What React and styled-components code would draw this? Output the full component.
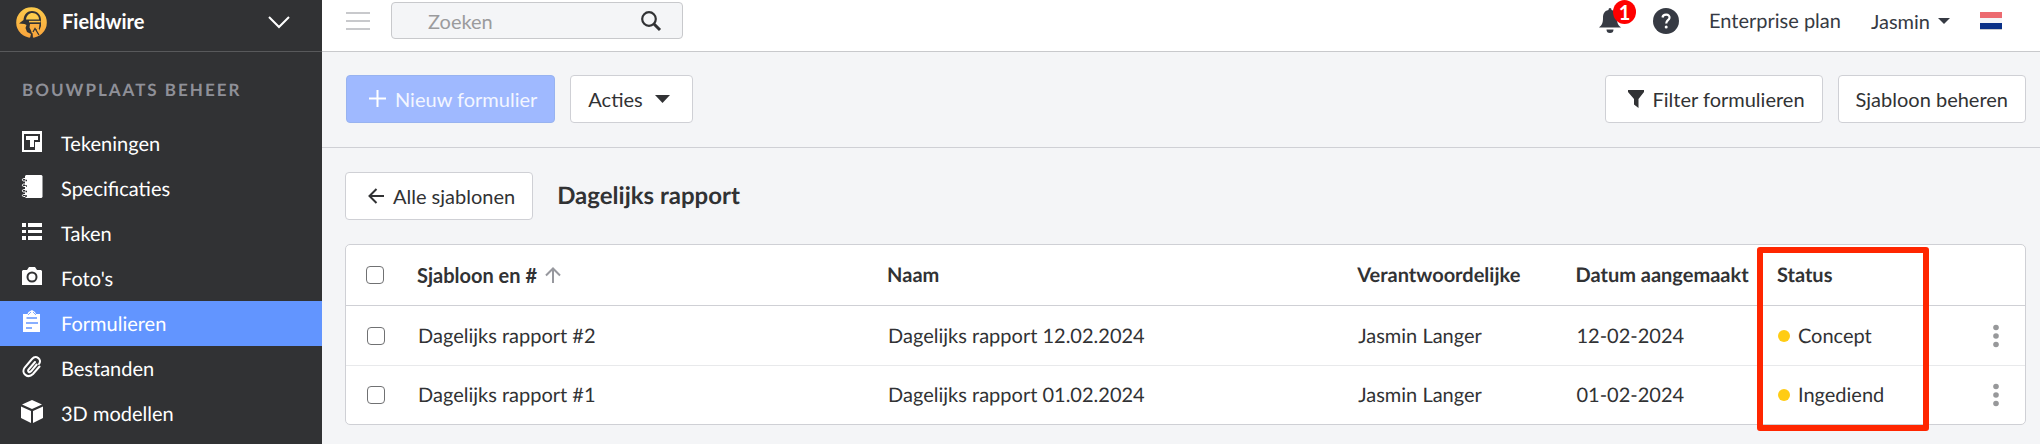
import { useState } from 'react'
import styled, { createGlobalStyle } from 'styled-components'

const GlobalStyle = createGlobalStyle`
  *, *::before, *::after {
    box-sizing: border-box;
  }
  body {
    margin: 0;
    background: #f4f5f7;
    color: #313234;
    font-family: Lato, "Liberation Sans", sans-serif;
    font-size: 20px;
    line-height: 24px;
    text-rendering: geometricPrecision;
  }
  button, input {
    font: inherit;
    color: inherit;
  }
  svg {
    display: block;
    flex: none;
  }
`

const Page = styled.div`
  display: flex;
  min-height: 100vh;
`

const Sidebar = styled.aside`
  flex: none;
  width: 322px;
  background: #313234;
  color: #fff;
`

const Project = styled.button`
  display: flex;
  align-items: center;
  width: 100%;
  height: 52px;
  padding: 0 32px 6px 16px;
  border: 0;
  border-bottom: 1px solid #58595b;
  background: none;
  font-weight: 700;
  text-align: left;
`

const ProjectName = styled.span`
  flex: 1;
  margin-left: 15px;
  padding-bottom: 4px;
  color: #fff;
`

const NavTitle = styled.h2`
  margin: 0;
  padding: 26px 22px 19px;
  color: #8f9098;
  font-size: 17px;
  font-weight: 700;
  line-height: 24px;
  letter-spacing: 2px;
  text-transform: uppercase;
  white-space: nowrap;
`

const NavLink = styled.a`
  display: flex;
  align-items: center;
  gap: 17px;
  height: 45px;
  padding: 0 20px;
  background: ${(props) => (props.$active ? '#6295ff' : 'transparent')};
  color: #fff;
  text-decoration: none;
  svg {
    margin-bottom: 4px;
  }
`

const Main = styled.main`
  flex: 1;
  min-width: 0;
`

const TopBar = styled.header`
  display: flex;
  align-items: center;
  height: 52px;
  padding: 0 38px 10px 24px;
  border-bottom: 1px solid #c8c9cc;
  background: #fff;
`

const PlainButton = styled.button`
  display: flex;
  align-items: center;
  gap: 8px;
  padding: 0;
  border: 0;
  background: none;
`

const Search = styled.label`
  display: flex;
  align-items: center;
  width: 292px;
  height: 37px;
  margin-left: 21px;
  padding: 0 20px 0 36px;
  border: 1px solid #c8c9cc;
  border-radius: 4px;
  background: #f4f5f7;
`

const SearchInput = styled.input`
  flex: 1;
  min-width: 0;
  padding: 0;
  border: 0;
  outline: 0;
  background: none;
  &::placeholder {
    color: #9b9b9d;
    opacity: 1;
  }
`

const Account = styled.div`
  display: flex;
  align-items: center;
  margin-left: auto;
  color: #363a43;
`

const Bell = styled(PlainButton)`
  position: relative;
  margin-right: 32px;
`

const Badge = styled.span`
  position: absolute;
  top: -8px;
  left: 14px;
  width: 23px;
  height: 24px;
  border-radius: 50%;
  background: #f00;
  color: #fff;
  font-weight: 700;
  line-height: 24px;
  text-align: center;
`

const Plan = styled.span`
  margin: 0 30px;
`

const Flag = styled(PlainButton)`
  margin-left: 30px;
`

const Toolbar = styled.div`
  display: flex;
  gap: 15px;
  padding: 23px 14px 24px 24px;
  border-bottom: 1px solid #cfd0d5;
`

const Spacer = styled.div`
  flex: 1;
`

const Button = styled.button`
  display: flex;
  align-items: center;
  gap: 9px;
  height: 48px;
  padding: 0 17px 1px;
  border: 1px solid ${(props) => (props.$primary ? '#98b3f0' : '#cfd0d5')};
  border-radius: 4px;
  background: ${(props) => (props.$primary ? '#9fb9ff' : '#fff')};
  color: ${(props) => (props.$primary ? '#f3f6ff' : '#313234')};
  white-space: nowrap;
`

const IconButton = styled(Button)`
  padding-left: 22px;
`

const MenuButton = styled(Button)`
  gap: 12px;
  padding-right: 22px;
`

const Heading = styled.div`
  display: flex;
  align-items: center;
  gap: 24px;
  padding: 24px 23px;
`

const Title = styled.h1`
  margin: 0;
  font-size: 24px;
  font-weight: 700;
  line-height: 30px;
`

const Card = styled.section`
  position: relative;
  margin: 0 14px 0 23px;
  border: 1px solid #cfd0d5;
  border-radius: 5px;
  background: #fff;
`

const Table = styled.table`
  width: 100%;
  border-spacing: 0;
  table-layout: fixed;
  text-align: left;
  white-space: nowrap;
  th {
    height: 61px;
    padding: 0;
    border-bottom: 1px solid #cfd0d5;
    font-weight: 700;
  }
  td {
    height: 60px;
    padding: 0 0 0 1px;
    border-bottom: 1px solid #e8e9eb;
  }
  tr:last-child td {
    height: 58px;
    border-bottom: 0;
  }
`

const Col = styled.col`
  width: ${(props) => props.$width};
`

const Checkbox = styled.input`
  appearance: none;
  display: block;
  width: 18px;
  height: 18px;
  margin: 0 0 0 20px;
  border: 1px solid #707173;
  border-radius: 4px;
  background: #fff;
  &:checked {
    background: #6295ff;
  }
`

const SortButton = styled(PlainButton)`
  font-weight: 700;
`

const Status = styled.span`
  display: flex;
  align-items: center;
  gap: 8px;
  &::before {
    content: '';
    width: 12px;
    height: 12px;
    border-radius: 50%;
    background: #ffcc14;
  }
`

const Highlight = styled.div`
  position: absolute;
  top: 2px;
  right: 96px;
  bottom: -7px;
  width: 172px;
  border: 6px solid #ff2600;
  border-radius: 3px;
  pointer-events: none;
`

const Logo = () => (
  <svg width="31" height="31" viewBox="0 0 31 31">
    <defs>
      <linearGradient id="sun" x1="0" y1="0" x2="0" y2="1">
        <stop offset="0" stopColor="#fccb4b" />
        <stop offset="1" stopColor="#f8a33c" />
      </linearGradient>
    </defs>
    <circle cx="15.500" cy="15.500" r="15.300" fill="url(#sun)" />
    <path d="M3 16.500 7.500 13C8 7 11.500 4 16 4c5.500 0 9 4 9 9v6l-3 8-3-5-2.500 3 .5 6h-3l1-4-4-2-1.500-4 1-3-2-1z" fill="#313234" />
    <path d="M10 12.500c.5-4 3-6.500 6.500-6.500 4 0 6.500 3 6.500 6.500z" fill="#fccb4b" />
    <path d="M13 14.600h11.500" stroke="#fbc149" strokeWidth="1.500" />
    <path d="M14 17h9.500l-.5 4-3 1.500-2.500 3-1.500 1-1-3-1.500-3z" fill="#f9ad40" />
    <path d="m22 20 3 6-2 2-3-4z" fill="#f9ad40" />
    <path d="m17 25 2-3.500 4 6.500" fill="none" stroke="#313234" strokeWidth="1.200" />
  </svg>
)

const icons = {
  plans: (
    <>
      <path fill="#fff" d="M1 1h20v21H1z" />
      <path d="M3 4h16v8h-5v8H3z" fill="#313234" />
      <path d="M5 6h12v4h-1.500V8H7v2H5zM7 8h9v2h-3v7H9v-7H7z" fill="#fff" />
    </>
  ),
  specs: (
    <>
      <path fill="#fff" d="M5 0h15.500l1 1v21l-1 1H5l-1-1V1z" />
      <path d="M6 5.500H3M6 11H3M6 16.500H3M6 21H3" fill="none" stroke="#313234" strokeWidth="1.500" />
      <path d="M5 6H2.500c-1.500 0-1.500-2.500 0-2.500H4M5 11.500H2.500c-1.500 0-1.500-2.500 0-2.500H4M5 17H2.500c-1.500 0-1.500-2.500 0-2.500H4M4 21.500H2.500c-1.500 0-1.500-2 0-2H4" fill="none" stroke="#fff" />
    </>
  ),
  tasks: <path fill="#fff" d="M1 3h4v4H1zM7 3h14v4H7zM1 10h4v3H1zM7 10h14v3H7zM1 16h4v4H1zM7 16h14v4H7z" />,
  photos: (
    <>
      <path fill="#fff" d="M2 5h4l2-3h6l2 3h4l1 1v14H1V6z" />
      <circle cx="11" cy="12" r="4.500" fill="none" stroke="#313234" strokeWidth="2" />
    </>
  ),
  forms: (
    <>
      <path fill="#fff" d="M2 4h4.500l1-2L11 0l3 2 1 2h4v18H2z" />
      <path d="M5.500 8h10.500M5 13h12M5 18h6" stroke="#6295ff" strokeWidth="1.300" />
      <path d="m7 5 3-3M15 5l-3-3" stroke="#6295ff" strokeWidth=".8" />
    </>
  ),
  files: (
    <path
      d="M15.700 9.500 10 16.300c-1.600 1.700-3.800.2-2.500-1.700L14 7M18.500 11.500 12 19c-5 5-12.500-.5-8.300-6.500L11 4c4-4.500 10.500.5 7 5"
      fill="none"
      stroke="#fff"
      strokeWidth="2"
      strokeLinecap="round"
    />
  ),
  models: <path fill="#fff" d="m11 0 10 4.500L11 9 1 4.500zM0 6.500l10 4.500v12L0 18zM22 6.500 12 11v12l10-5z" />,
}

const links = [
  { icon: 'plans', label: 'Tekeningen' },
  { icon: 'specs', label: 'Specificaties' },
  { icon: 'tasks', label: 'Taken' },
  { icon: 'photos', label: "Foto's" },
  { icon: 'forms', label: 'Formulieren', active: true },
  { icon: 'files', label: 'Bestanden' },
  { icon: 'models', label: '3D modellen' },
]

const reports = [
  { id: 2, name: 'Dagelijks rapport 12.02.2024', date: '12-02-2024', status: 'Concept' },
  { id: 1, name: 'Dagelijks rapport 01.02.2024', date: '01-02-2024', status: 'Ingediend' },
]

function Nav() {
  return (
    <Sidebar>
      <Project>
        <Logo />
        <ProjectName>Fieldwire</ProjectName>
        <svg width="22" height="13" viewBox="0 0 22 13">
          <path d="m1 1 10 10L21 1" fill="none" stroke="#fff" strokeWidth="2" />
        </svg>
      </Project>
      <NavTitle>Bouwplaats beheer</NavTitle>
      <nav>
        {links.map(({ icon, label, active }) => (
          <NavLink key={icon} href="#" $active={active}>
            <svg width="24" height="24" viewBox="-1 0 24 24">{icons[icon]}</svg>
            {label}
          </NavLink>
        ))}
      </nav>
    </Sidebar>
  )
}

function Header() {
  return (
    <TopBar>
      <PlainButton aria-label="Menu">
        <svg width="24" height="18" viewBox="0 0 24 18">
          <path d="M0 1h24M0 9h24M0 17h24" stroke="#c8c9cc" strokeWidth="2" />
        </svg>
      </PlainButton>
      <Search>
        <SearchInput type="search" placeholder="Zoeken" aria-label="Zoeken" />
        <svg width="22" height="22" viewBox="0 0 22 22" fill="none" stroke="#313234">
          <circle cx="9" cy="9" r="6.800" strokeWidth="2.200" />
          <path d="m14 14 6 6" strokeWidth="3" />
        </svg>
      </Search>
      <Account>
        <Bell aria-label="Meldingen">
          <svg width="22" height="25" viewBox="0 0 22 25" fill="#363a43">
            <path d="M11 0c1 0 1.500.7 1.500 2C17 3 18 6 18 10c0 5 1 7 4 9.500H0C3 17 4 15 4 10c0-4 1-7 5.500-8 0-1.300.5-2 1.500-2zM7.500 21.500h7a3.500 3.500 0 0 1-7 0z" />
          </svg>
          <Badge>1</Badge>
        </Bell>
        <PlainButton aria-label="Help">
          <svg width="26" height="26" viewBox="0 0 26 26">
            <circle cx="13" cy="13" r="13" fill="#363a43" />
            <path d="M9.500 9.500c.6-4 7.500-3.600 7 .3-.3 2.400-3.300 2.600-3.300 5.700" fill="none" stroke="#fff" strokeWidth="2.200" />
            <circle cx="13.200" cy="19" r="1.500" fill="#fff" />
          </svg>
        </PlainButton>
        <Plan>Enterprise plan</Plan>
        <PlainButton>
          Jasmin
          <svg width="12" height="6" viewBox="0 0 12 6"><path d="M0 0h12L6 6z" fill="#363a43" /></svg>
        </PlainButton>
        <Flag aria-label="Nederlands">
          <svg width="22" height="18" viewBox="0 0 22 18">
            <path fill="#ec6a70" d="M0 0h22v7H0z" />
            <path fill="#f4f5f8" d="M0 6h22v6H0z" />
            <path fill="#0a3087" d="M0 11h22v6H0z" />
            <path fill="#c8c9cc" d="M0 17h22v1H0z" />
          </svg>
        </Flag>
      </Account>
    </TopBar>
  )
}

function Reports() {
  const [selected, setSelected] = useState([])
  const toggle = (id) =>
    setSelected(selected.includes(id) ? selected.filter((item) => item !== id) : [...selected, id])
  const toggleAll = () => setSelected(selected.length ? [] : reports.map(({ id }) => id))

  return (
    <Card>
      <Table>
        <colgroup>
          <Col $width="71px" />
          <Col $width="28%" />
          <Col $width="28%" />
          <Col $width="13%" />
          <Col $width="12%" />
          <Col />
          <Col $width="42px" />
        </colgroup>
        <thead>
          <tr>
            <th>
              <Checkbox type="checkbox" aria-label="Alles" checked={selected.length === reports.length} onChange={toggleAll} />
            </th>
            <th>
              <SortButton>
                Sjabloon en #
                <svg width="16" height="16" viewBox="0 0 16 16">
                  <path d="M8 16V2M1 8.500 8 1.500l7 7" fill="none" stroke="#97989e" strokeWidth="2" />
                </svg>
              </SortButton>
            </th>
            <th>Naam</th>
            <th>Verantwoordelijke</th>
            <th>Datum aangemaakt</th>
            <th>Status</th>
            <th />
          </tr>
        </thead>
        <tbody>
          {reports.map(({ id, name, date, status }) => (
            <tr key={id}>
              <td>
                <Checkbox type="checkbox" aria-label={name} checked={selected.includes(id)} onChange={() => toggle(id)} />
              </td>
              <td>Dagelijks rapport #{id}</td>
              <td>{name}</td>
              <td>Jasmin Langer</td>
              <td>{date}</td>
              <td><Status>{status}</Status></td>
              <td>
                <PlainButton aria-label="Meer">
                  <svg width="24" height="24" viewBox="0 0 24 24" fill="#97989a">
                    <circle cx="12" cy="3.500" r="2.800" />
                    <circle cx="12" cy="12" r="2.800" />
                    <circle cx="12" cy="20.500" r="2.800" />
                  </svg>
                </PlainButton>
              </td>
            </tr>
          ))}
        </tbody>
      </Table>
      <Highlight />
    </Card>
  )
}

export default function App() {
  return (
    <Page>
      <GlobalStyle />
      <Nav />
      <Main>
        <Header />
        <Toolbar>
          <IconButton $primary>
            <svg width="17" height="17" viewBox="0 0 17 17">
              <path d="M8.500 0v17M0 8.500h17" stroke="#fff" strokeWidth="2" />
            </svg>
            Nieuw formulier
          </IconButton>
          <MenuButton>
            Acties
            <svg width="15" height="8" viewBox="0 0 15 8"><path d="M0 0h15L7.500 8z" fill="#313234" /></svg>
          </MenuButton>
          <Spacer />
          <IconButton>
            <svg width="16" height="18" viewBox="0 0 16 18">
              <path d="M0 0h16v2l-5.500 7v9L6 14.500V9L0 2z" fill="#313234" />
            </svg>
            Filter formulieren
          </IconButton>
          <Button>Sjabloon beheren</Button>
        </Toolbar>
        <Heading>
          <IconButton>
            <svg width="16" height="16" viewBox="0 0 16 16">
              <path d="M16 8H2M8.500 1l-7 7 7 7" fill="none" stroke="#313234" strokeWidth="2" />
            </svg>
            Alle sjablonen
          </IconButton>
          <Title>Dagelijks rapport</Title>
        </Heading>
        <Reports />
      </Main>
    </Page>
  )
}
